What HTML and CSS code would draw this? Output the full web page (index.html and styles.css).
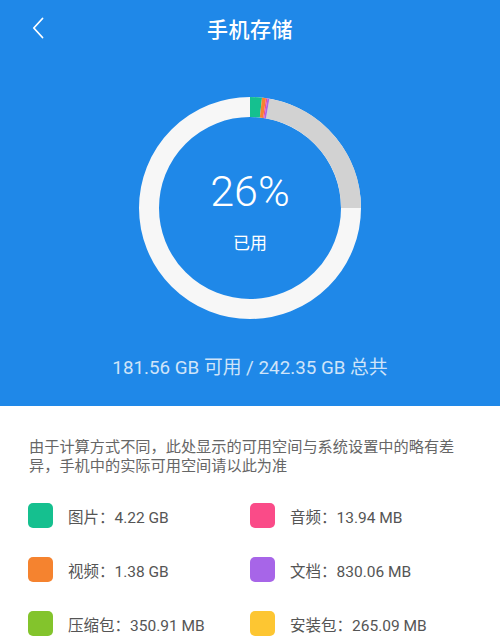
FILE: index.html
```html
<!DOCTYPE html>
<html lang="zh-CN">
<head>
<meta charset="utf-8">
<title>手机存储</title>
<link rel="stylesheet" href="styles.css">
</head>
<body>
<div class="hero">
  <header class="topbar">
    <svg class="back" viewBox="0 0 12 22" width="12" height="22"><path d="M10.5 1.5 L1.8 11 L10.5 20.5" fill="none" stroke="#fff" stroke-width="1.8" stroke-linecap="round" stroke-linejoin="round"/></svg>
    <h1 class="title">手机存储</h1>
  </header>
  <div class="ring">
    <svg class="ring-svg" viewBox="0 0 222 222" width="222" height="222">
      <g transform="rotate(-90 111 111)">
        <circle cx="111" cy="111" r="101" fill="none" stroke="#f7f7f7" stroke-width="20"/>
        <circle cx="111" cy="111" r="101" fill="none" stroke="#d2d2d2" stroke-width="20" pathLength="100" stroke-dasharray="22.2 77.8" stroke-dashoffset="-2.8"/>
        <circle cx="111" cy="111" r="101" fill="none" stroke="#15c08f" stroke-width="20" pathLength="100" stroke-dasharray="1.75 98.25" stroke-dashoffset="0"/>
        <circle cx="111" cy="111" r="101" fill="none" stroke="#f5832f" stroke-width="20" pathLength="100" stroke-dasharray="0.57 99.43" stroke-dashoffset="-1.75"/>
        <circle cx="111" cy="111" r="101" fill="none" stroke="#fa4b88" stroke-width="20" pathLength="100" stroke-dasharray="0.2 99.8" stroke-dashoffset="-2.32"/>
        <circle cx="111" cy="111" r="101" fill="none" stroke="#a765e8" stroke-width="20" pathLength="100" stroke-dasharray="0.28 99.72" stroke-dashoffset="-2.52"/>
      </g>
    </svg>
    <div class="ring-label">
      <div class="percent">26%</div>
      <div class="used">已用</div>
    </div>
  </div>
  <p class="summary">181.56 GB 可用 / 242.35 GB 总共</p>
</div>
<main class="content">
  <p class="note">由于计算方式不同，此处显示的可用空间与系统设置中的略有差异，手机中的实际可用空间请以此为准</p>
  <ul class="legend">
    <li class="item"><span class="swatch c-pic"></span>图片：4.22 GB</li>
    <li class="item"><span class="swatch c-audio"></span>音频：13.94 MB</li>
    <li class="item"><span class="swatch c-video"></span>视频：1.38 GB</li>
    <li class="item"><span class="swatch c-doc"></span>文档：830.06 MB</li>
    <li class="item"><span class="swatch c-zip"></span>压缩包：350.91 MB</li>
    <li class="item"><span class="swatch c-apk"></span>安装包：265.09 MB</li>
  </ul>
</main>
</body>
</html>
```
FILE: styles.css
```css
* { box-sizing: border-box; }
html, body { margin: 0; padding: 0; }
body {
  width: 500px;
  height: 642px;
  overflow: hidden;
  background: #ffffff;
  font-family: Roboto, "Noto Sans CJK SC", sans-serif;
}
.hero {
  background: #1f88e8;
  height: 406px;
  display: flex;
  flex-direction: column;
  align-items: center;
}
.topbar {
  width: 100%;
  height: 56px;
  display: flex;
  align-items: center;
  justify-content: center;
  position: relative;
}
.back {
  position: absolute;
  left: 32px;
  top: 17px;
}
.title {
  margin: 0;
  color: #ffffff;
  font-family: "Noto Sans CJK SC", sans-serif;
  font-size: 21px;
  font-weight: 500;
  letter-spacing: 0.5px;
}
.ring {
  margin-top: 41px;
  width: 222px;
  height: 222px;
  display: grid;
}
.ring-svg, .ring-label { grid-area: 1 / 1; }
.ring-label {
  display: flex;
  flex-direction: column;
  align-items: center;
  justify-content: center;
  padding-top: 3px;
  color: #ffffff;
}
.percent {
  font-size: 43px;
  font-weight: 300;
  line-height: 48px;
}
.used {
  margin-top: 16px;
  font-family: "Noto Sans CJK SC", sans-serif;
  font-size: 17px;
  line-height: 22px;
}
.summary {
  margin: 37px 0 0;
  color: #cfe4f9;
  font-size: 18.8px;
  line-height: 24px;
}
.content {
  padding: 30px 0 0 29px;
}
.note {
  margin: 0;
  width: 432px;
  font-family: "Noto Sans CJK SC", sans-serif;
  font-size: 15.2px;
  line-height: 18.5px;
  color: #666666;
}
.legend {
  list-style: none;
  margin: 30px 0 0;
  padding: 0;
  display: grid;
  grid-template-columns: 222px 222px;
  row-gap: 29px;
  margin-left: -1px;
}
.item {
  display: flex;
  align-items: center;
  height: 25px;
  font-size: 15.5px;
  color: #555555;
}
.swatch {
  width: 25px;
  height: 25px;
  border-radius: 5px;
  margin-right: 15px;
  flex: none;
}
.c-pic { background: #15c08f; }
.c-audio { background: #fa4b88; }
.c-video { background: #f5832f; }
.c-doc { background: #a765e8; }
.c-zip { background: #83c42c; }
.c-apk { background: #fdc632; }
```
